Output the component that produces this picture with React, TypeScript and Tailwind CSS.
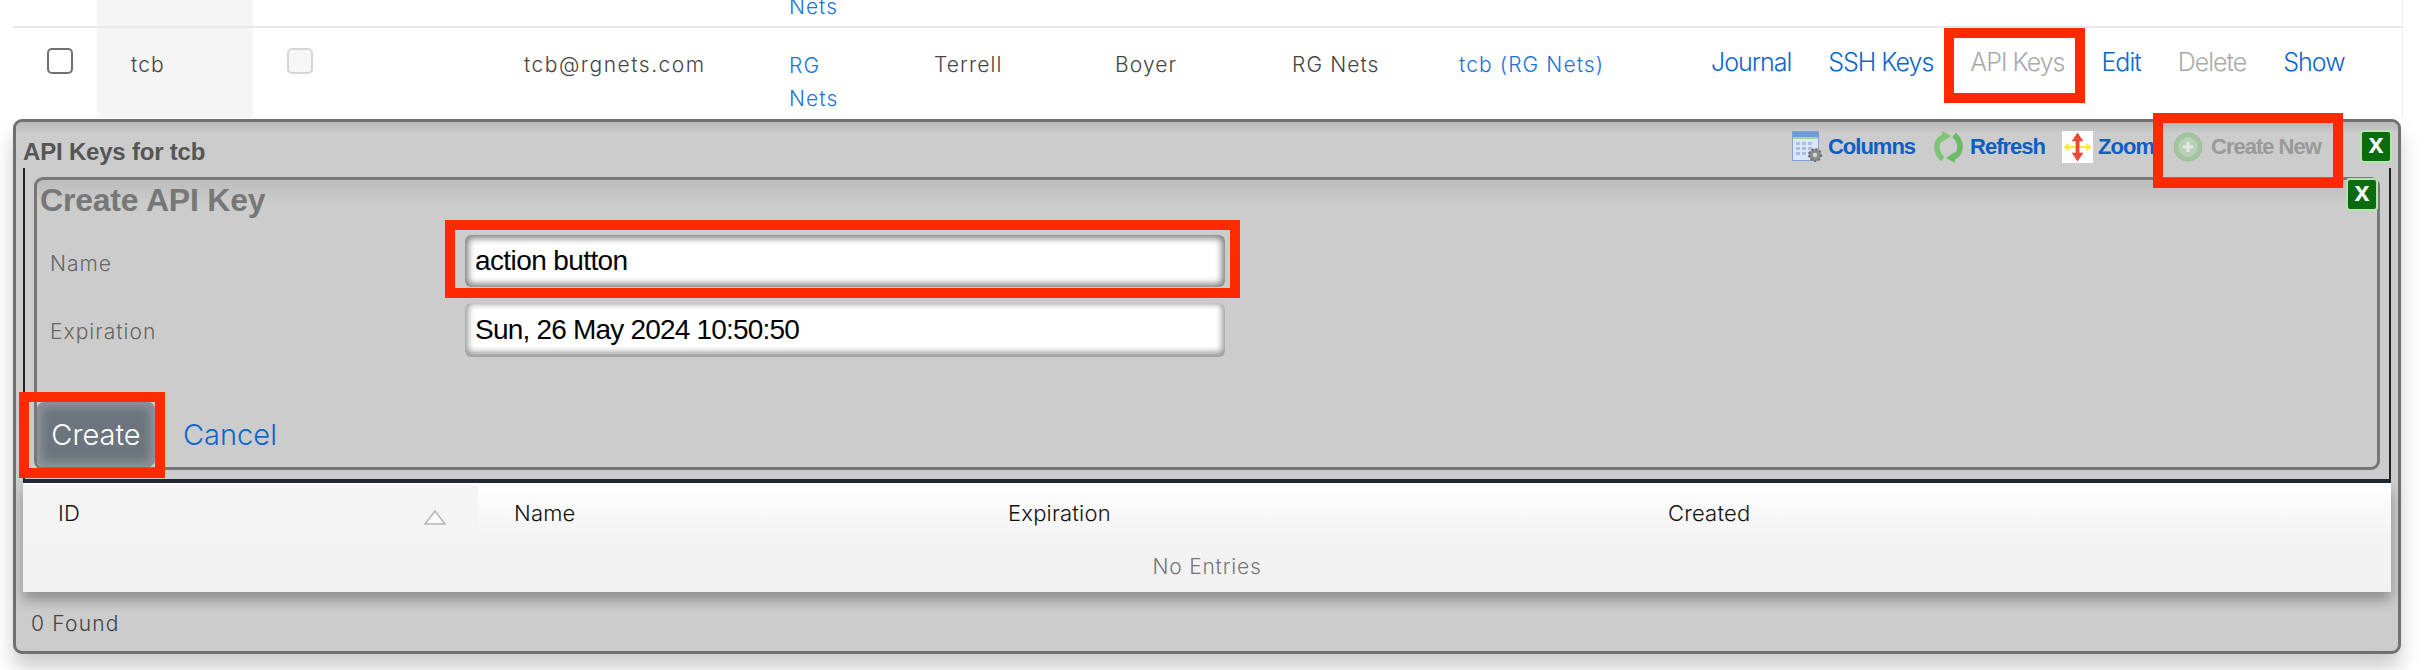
const sans = "font-['Inter',sans-serif]";

function CheckBox({ disabled }: { disabled?: boolean }) {
  return (
    <div
      className={
        disabled
          ? "w-[26px] h-[26px] rounded-[5px] border-[2px] border-[#d6d6d6] bg-[#f6f6f6]"
          : "w-[26px] h-[26px] rounded-[5px] border-[2px] border-[#707070] bg-white"
      }
    />
  );
}

function ColumnsIcon() {
  return (
    <svg width="31" height="31" viewBox="0 0 31 31">
      <rect x="0.5" y="0.5" width="26" height="29" fill="#dbe7f7" stroke="#7fa3d6" />
      <rect x="1" y="1" width="25" height="5" fill="#6f9bd8" />
      <rect x="1" y="6" width="25" height="2" fill="#a6d39a" />
      {[4, 10, 16].map((x) =>
        [11, 16, 21].map((y) => (
          <rect key={`${x}-${y}`} x={x} y={y} width="4" height="3" fill="#a9bfe0" />
        )),
      )}
      <circle cx="23" cy="24" r="6" fill="#8a8a8a" />
      <circle cx="23" cy="24" r="6" fill="none" stroke="#6b6b6b" strokeWidth="2" strokeDasharray="2 2" />
      <circle cx="23" cy="24" r="2.2" fill="#d8d8d8" />
    </svg>
  );
}

function RefreshIcon() {
  return (
    <svg width="33" height="32" viewBox="0 0 33 32">
      <path d="M11 28 C3 22 3 10 11 6" fill="none" stroke="#7cc576" strokeWidth="5.5" />
      <path d="M10 0 L19 5 L10 11 Z" fill="#7cc576" />
      <path d="M22 4 C30 10 30 22 22 26" fill="none" stroke="#6bbb66" strokeWidth="5.5" />
      <path d="M23 21 L14 27 L23 32 Z" fill="#6bbb66" />
    </svg>
  );
}

function ZoomIcon() {
  return (
    <svg width="32" height="32" viewBox="0 0 32 32" className="bg-white">
      <path d="M1 16 L7 12 V15 H25 V12 L31 16 L25 20 V17 H7 V20 Z" fill="#ffe93b" />
      <path d="M16 1 L22 10 H18 V22 H22 L16 31 L10 22 H14 V10 H10 Z" fill="#ea4a35" />
    </svg>
  );
}

function CreateIcon() {
  return (
    <svg width="30" height="30" viewBox="0 0 30 30">
      <circle cx="15" cy="15" r="14" fill="#a3c5a0" stroke="#9cbc99" />
      <circle cx="15" cy="15" r="9" fill="#b9cfb7" stroke="#c5d6c3" />
      <path d="M15 10 V20 M10 15 H20" stroke="#e4ece3" strokeWidth="3" />
    </svg>
  );
}

function CloseBox({ className }: { className: string }) {
  return (
    <div
      className={`w-[32px] h-[33px] flex items-center justify-center bg-[#0b6b0f] border-[2px] border-[#b6e3b0] rounded-[4px] text-white font-bold text-[27px] leading-none pb-[5px] font-['Liberation_Sans',sans-serif] ${className}`}
    >
      x
    </div>
  );
}

function ToolLink({ icon, label, className }: { icon: React.ReactNode; label: string; className: string }) {
  return (
    <a className={`flex items-center gap-[5px] font-bold text-[22px] tracking-[-1px] font-['Liberation_Sans',sans-serif] ${className}`}>
      {icon}
      {label}
    </a>
  );
}

function RedBox({ className }: { className: string }) {
  return <div className={`absolute border-[10px] border-[#ff2a00] ${className}`} />;
}

export default function App() {
  return (
    <div className={`relative h-[670px] overflow-hidden bg-white ${sans}`}>
      <div className="ml-[13px] w-[2390px] border-r border-[#eeeeee]">
        {/* rest of the previous row */}
        <div className="flex h-[26px] overflow-hidden">
          <div className="w-[84px]" />
          <div className="w-[156px] bg-[#f5f5f5]" />
          <div className="pl-[536px] -mt-[9px] text-[21px] tracking-[1px] font-light text-[#1a73d9]">Nets</div>
        </div>
        <div className="h-[2px] bg-[#e8e8e8]" />

        {/* tcb row */}
        <div className="flex items-start h-[90px] text-[21px] leading-[30px] tracking-[1.1px] font-light text-[#444444]">
          <div className="w-[84px] pl-[34px] pt-[20px]">
            <CheckBox />
          </div>
          <div className="w-[156px] h-full pl-[34px] pt-[22px] bg-[#f5f5f5]">tcb</div>
          <div className="w-[237px] pl-[34px] pt-[20px]">
            <CheckBox disabled />
          </div>
          <div className="w-[265px] pl-[34px] pt-[22px] tracking-[1.5px]">tcb@rgnets.com</div>
          <div className="w-[145px] pl-[34px] text-[#1a73d9] leading-[33px] pt-[21px]">
            RG
            <br />
            Nets
          </div>
          <div className="w-[181px] pl-[34px] pt-[22px]">Terrell</div>
          <div className="w-[177px] pl-[34px] pt-[22px]">Boyer</div>
          <div className="w-[167px] pl-[34px] pt-[22px]">RG Nets</div>
          <div className="w-[286px] pl-[34px] pt-[22px] text-[#1a73d9]">tcb (RG Nets)</div>
          <div className="flex gap-[37px] pt-[19px] text-[25px] tracking-[-1px] text-[#0b66d0]">
            <a>Journal</a>
            <a>SSH Keys</a>
            <a className="text-[#aaaaaa]">API Keys</a>
            <a>Edit</a>
            <a className="text-[#aaaaaa]">Delete</a>
            <a>Show</a>
          </div>
        </div>
      </div>

      {/* API keys panel */}
      <div className="mt-[1px] ml-[13px] w-[2388px] rounded-[9px] border-[3px] border-[#707070] bg-[#cccccc] shadow-[0_14px_20px_rgba(0,0,0,0.2)]">
        <div className="flex items-center h-[46px] pl-[7px] pr-[6px] bg-gradient-to-b from-[#b8b8b8] to-[#cccccc] to-[25%] rounded-t-[6px]">
          <div className="font-bold text-[24px] text-[#555555] tracking-[-0.2px] font-['Liberation_Sans',sans-serif] mt-[13px]">
            API Keys for tcb
          </div>
          <div className="flex items-center ml-auto mt-[3px]">
            <ToolLink icon={<ColumnsIcon />} label="Columns" className="text-[#0b5fc4] mr-[17px]" />
            <ToolLink icon={<RefreshIcon />} label="Refresh" className="text-[#0b5fc4] mr-[17px]" />
            <ToolLink icon={<ZoomIcon />} label="Zoom" className="text-[#0b5fc4] w-[92px]" />
            <ToolLink icon={<CreateIcon />} label="Create New" className="ml-[19px] text-[#999999] w-[156px] gap-[8px]" />
            <CloseBox className="ml-[31px] shrink-0" />
          </div>
        </div>

        <div className="mx-[7px] border-x-[2px] border-[#222222]">
          <div className="border-b-[4px] border-[#222932] pt-[9px] pb-[9px] pl-[9px] pr-[9px]">
            {/* create form */}
            <div className="relative h-[293px] rounded-[9px] border-[3px] border-[#777777] bg-gradient-to-b from-[#bcbcbc] to-[#cccccc] to-[8%]">
              <CloseBox className="absolute -top-[2px] -right-[1px]" />
              <div className="h-[40px] pl-[3px] font-bold text-[32px] leading-[40px] tracking-[-0.2px] text-[#777777] font-['Liberation_Sans',sans-serif]">
                Create API Key
              </div>
              <div className="mt-[15px] flex items-center text-[21px] tracking-[1px] font-light text-[#666666]">
                <label className="w-[428px] pl-[13px] mt-[6px]">Name</label>
                <input
                  readOnly
                  value="action button"
                  className="w-[760px] h-[52px] px-[10px] rounded-[6px] bg-white text-[28px] tracking-[-0.6px] text-black outline-none font-['Liberation_Sans',sans-serif] shadow-[inset_0_0_7px_3px_#777777]"
                />
              </div>
              <div className="mt-[16px] flex items-center text-[21px] tracking-[1px] font-light text-[#666666]">
                <label className="w-[428px] pl-[13px] mt-[3px]">Expiration</label>
                <input
                  readOnly
                  value="Sun, 26 May 2024 10:50:50"
                  className="w-[760px] h-[54px] px-[10px] rounded-[6px] bg-white text-[28px] tracking-[-0.8px] text-black outline-none font-['Liberation_Sans',sans-serif] shadow-[inset_0_-2px_6px_3px_#999999]"
                />
              </div>
              <div className="mt-[45px] flex items-center">
                <button className="w-[118px] h-[65px] rounded-[7px] border border-[#8a9096] bg-[#6c757d] text-[29px] font-light text-white shadow-[inset_0_0_10px_4px_#8f959b]">
                  Create
                </button>
                <a className="ml-[28px] text-[29px] font-light text-[#0b66d0]">Cancel</a>
              </div>
            </div>
          </div>

          {/* keys table */}
          <div className="bg-gradient-to-b from-[#ffffff] to-[#f2f2f2] to-[55%] shadow-[0_8px_12px_rgba(0,0,0,0.3)] -mx-[2px]">
            <div className="flex h-[58px] items-center pt-[3px] text-[22px] tracking-[0.2px] font-[350] text-[#111111]">
              <div className="relative w-[455px] h-full flex items-center pl-[35px] bg-[#f4f4f4] -mt-[3px] pt-[3px]">
                ID
                <svg width="24" height="16" viewBox="0 0 24 16" className="absolute left-[400px] top-[25px]">
                  <path d="M2 14 L12 1 L22 14 Z" fill="#fafafa" stroke="#b5b5b5" strokeWidth="1.5" />
                </svg>
              </div>
              <div className="w-[495px] pl-[36px]">Name</div>
              <div className="w-[660px] pl-[35px]">Expiration</div>
              <div className="pl-[35px]">Created</div>
            </div>
            <div className="flex h-[51px] items-center justify-center text-[21px] tracking-[0.8px] font-light text-[#777777]">
              No Entries
            </div>
          </div>
        </div>

        <div className="flex items-center h-[59px] pt-[4px] pl-[15px] text-[21px] tracking-[1.2px] font-light text-[#444444]">0 Found</div>
      </div>

      {/* annotation boxes */}
      <RedBox className="left-[1944px] top-[28px] w-[141px] h-[75px]" />
      <RedBox className="left-[2153px] top-[113px] w-[190px] h-[75px]" />
      <RedBox className="left-[445px] top-[220px] w-[795px] h-[78px]" />
      <RedBox className="left-[19px] top-[392px] w-[146px] h-[86px]" />
    </div>
  );
}
